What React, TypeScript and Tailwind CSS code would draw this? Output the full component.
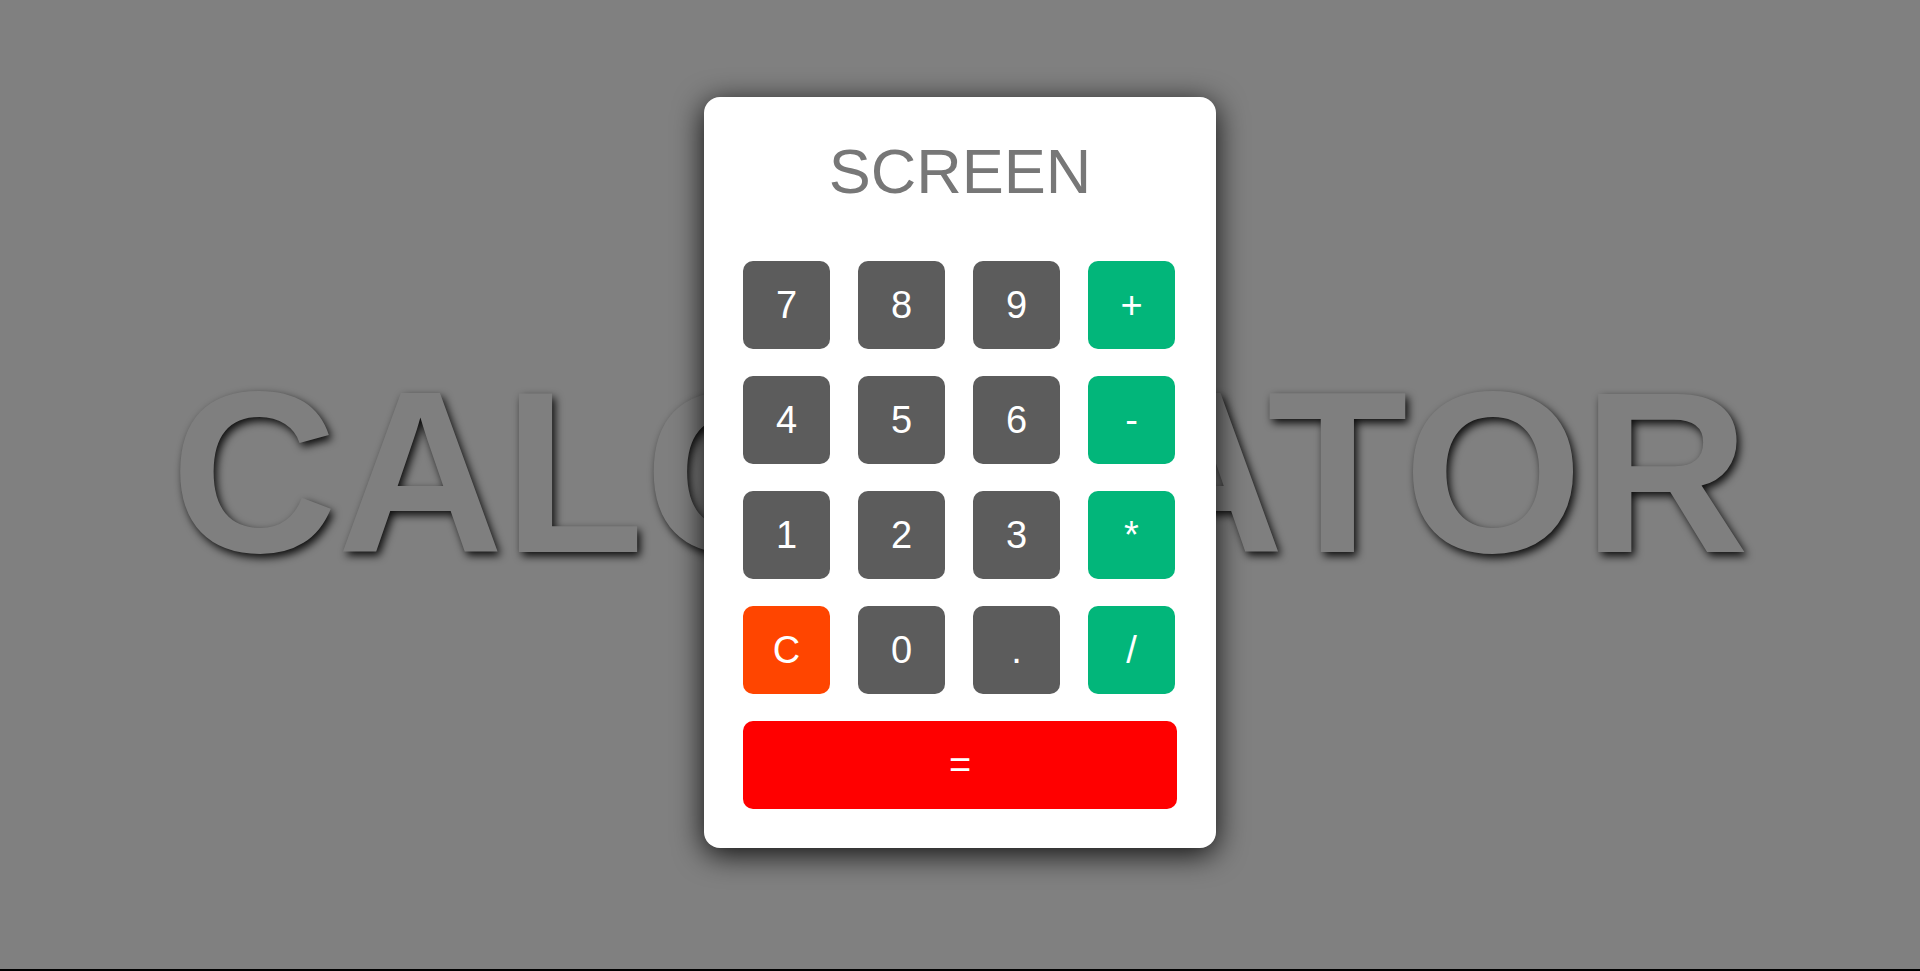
import React from "react";

const dark = "bg-[#5c5c5c]";
const green = "bg-[#02b67a]";

type Key = { label: string; color: string };

const keys: Key[] = [
  { label: "7", color: dark },
  { label: "8", color: dark },
  { label: "9", color: dark },
  { label: "+", color: green },
  { label: "4", color: dark },
  { label: "5", color: dark },
  { label: "6", color: dark },
  { label: "-", color: green },
  { label: "1", color: dark },
  { label: "2", color: dark },
  { label: "3", color: dark },
  { label: "*", color: green },
  { label: "C", color: "bg-[#ff4500]" },
  { label: "0", color: dark },
  { label: ".", color: dark },
  { label: "/", color: green },
];

export default function App() {
  return (
    <div className="h-[971px] w-full bg-black overflow-hidden font-['Liberation_Sans',Arial,sans-serif]">
      <div className="h-[969px] w-full bg-[#808080]">
        <div className="grid h-[945px] w-full place-items-center">
          <div className="[grid-area:1/1] text-[230.4px] font-bold leading-normal text-[#7f7f7f] [text-shadow:3px_4px_8px_rgba(0,0,0,0.9)] whitespace-nowrap select-none">
            CALCULATOR
          </div>
          <div className="[grid-area:1/1] w-[512px] rounded-[16px] bg-white px-[39px] pt-[39px] pb-[39px] shadow-[0_6px_30px_rgba(0,0,0,0.9)]">
            <div className="h-[70px] text-center text-[63px] leading-[70px] text-[#777777]">
              SCREEN
            </div>
            <div className="mt-[55px] grid grid-cols-[repeat(4,87px)] gap-x-[28px] gap-y-[27px]">
              {keys.map((k) => (
                <button
                  key={k.label}
                  className={`flex h-[88px] w-[87px] items-center justify-center rounded-[10px] text-[38px] leading-none text-white ${k.color}`}
                >
                  {k.label}
                </button>
              ))}
            </div>
            <button className="mt-[27px] flex h-[88px] w-[434px] items-center justify-center rounded-[10px] bg-[#ff0000] text-[38px] leading-none text-white">
              =
            </button>
          </div>
        </div>
      </div>
    </div>
  );
}
